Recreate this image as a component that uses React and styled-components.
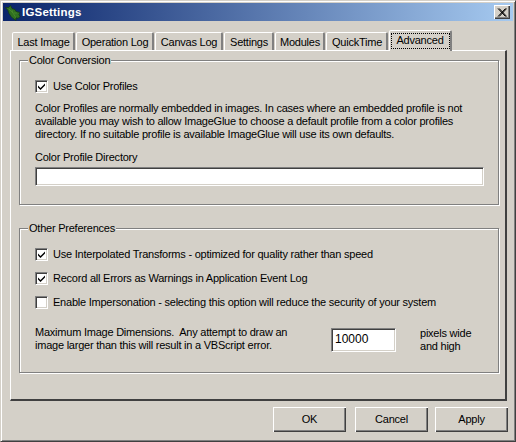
import React from "react";
import styled, { createGlobalStyle } from "styled-components";

const Global = createGlobalStyle`
  html, body { margin: 0; padding: 0; background: #d4d0c8; }
  * { box-sizing: border-box; }
`;

const Window = styled.div`
  width: 516px;
  height: 442px;
  display: flex;
  flex-direction: column;
  padding: 2px;
  background: #d4d0c8;
  border: 1px solid;
  border-color: #d4d0c8 #404040 #404040 #d4d0c8;
  box-shadow: inset 1px 1px 0 #fff, inset -1px -1px 0 #808080;
  font-family: "Liberation Sans", Arial, sans-serif;
  font-size: 11px;
  line-height: 13px;
  letter-spacing: -0.23px;
  color: #000;
`;

const TitleBar = styled.div`
  height: 18px;
  flex: none;
  display: flex;
  align-items: center;
  padding: 0 3px 0 2px;
  background: linear-gradient(90deg, #0a246a, #a6caf0);
`;

const TitleIcon = styled.svg`
  width: 17px;
  height: 17px;
  flex: none;
`;

const TitleText = styled.span`
  flex: 1;
  color: #fff;
  font-weight: 700;
  font-size: 11.5px;
  letter-spacing: 0.2px;
`;

const CloseButton = styled.div`
  width: 16px;
  height: 14px;
  display: flex;
  align-items: center;
  justify-content: center;
  background: #d4d0c8;
  box-shadow: inset 1px 1px 0 #fff, inset -1px -1px 0 #404040, inset -2px -2px 0 #808080;
`;

const Body = styled.div`
  flex: 1;
  display: flex;
  flex-direction: column;
  padding: 9px 5px 0 7px;
`;

const TabRow = styled.div`
  height: 20px;
  display: flex;
  align-items: flex-end;
  padding-left: 2px;
  gap: 1px;
  position: relative;
  z-index: 1;
`;

const Tab = styled.div`
  width: ${(p) => p.$w}px;
  height: ${(p) => (p.$active ? 21 : 18)}px;
  margin-bottom: ${(p) => (p.$active ? -1 : 0)}px;
  display: flex;
  align-items: center;
  justify-content: center;
  padding: ${(p) => (p.$active ? "0 0 1px" : "1px 0 0 1px")};
  background: #d4d0c8;
  border-radius: 2px 2px 0 0;
  border-style: solid;
  border-width: 1px 2px 0 1px;
  border-color: #fff #808080 transparent #fff;
`;

const Focus = styled.span`
  width: 59px;
  height: 16px;
  display: flex;
  align-items: center;
  justify-content: center;
  outline: 1px dotted #000;
  outline-offset: -1px;
`;

const Panel = styled.div`
  width: 497px;
  height: 351px;
  display: flex;
  flex-direction: column;
  padding: 9px 8px 0 8px;
  border-style: solid;
  border-width: 1px 2px 2px 1px;
  border-color: #fff #404040 #404040 #fff;
`;

const Group = styled.div`
  width: 480px;
  height: ${(p) => p.$h}px;
  margin-bottom: ${(p) => p.$mb || 0}px;
  padding: 0 15px;
  border: 1px solid #808080;
  box-shadow: 1px 1px 0 #fff, inset 1px 1px 0 #fff;
  display: flex;
  flex-direction: column;
`;

const Legend = styled.div`
  width: fit-content;
  margin: -7px 0 0 -7px;
  padding: 0 1px;
  height: 13px;
  background: #d4d0c8;
`;

const CheckRow = styled.label`
  display: flex;
  align-items: center;
  height: 13px;
  margin-top: ${(p) => p.$mt}px;
`;

const CheckBox = styled.span`
  width: 13px;
  height: 13px;
  flex: none;
  margin-right: 5px;
  background: #fff;
  border: 1px solid;
  border-color: #808080 #fff #fff #808080;
  box-shadow: inset 1px 1px 0 #404040, inset -1px -1px 0 #d4d0c8;
  display: flex;
  align-items: center;
  justify-content: center;
`;

const Paragraph = styled.p`
  margin: 9px 0 0;
  white-space: pre;
`;

const FieldLabel = styled.div`
  margin-top: 10px;
`;

const TextBox = styled.div`
  width: ${(p) => p.$w}px;
  height: ${(p) => p.$h}px;
  margin-top: ${(p) => p.$mt || 0}px;
  flex: none;
  padding: 4px 3px;
  background: #fff;
  border: 1px solid;
  border-color: #808080 #fff #fff #808080;
  box-shadow: inset 1px 1px 0 #404040, inset -1px -1px 0 #d4d0c8;
  font-size: 12px;
  letter-spacing: 0;
`;

const DimensionRow = styled.div`
  display: flex;
  margin-top: 17px;
  align-items: center;
`;

const DimensionText = styled.div`
  width: 296px;
  white-space: pre;
  padding-bottom: 1px;
`;

const Unit = styled.div`
  margin-left: 24px;
  white-space: pre;
`;

const ButtonRow = styled.div`
  display: flex;
  justify-content: flex-end;
  margin-top: 6px;
`;

const Button = styled.div`
  width: 73px;
  height: 25px;
  margin-left: ${(p) => p.$ml}px;
  display: flex;
  align-items: center;
  justify-content: center;
  background: #d4d0c8;
  box-shadow: inset 1px 1px 0 #fff, inset -1px -1px 0 #404040, inset -2px -2px 0 #808080;
`;

const Check = () => (
  <svg width="9" height="9" viewBox="0 0 9 9">
    <path d="M1 3.5v2l2.5 2.5 4.5-4.5v-2l-4.5 4.5z" fill="#000" />
  </svg>
);

const Option = ({ mt, checked, children }) => (
  <CheckRow $mt={mt}>
    <CheckBox>{checked && <Check />}</CheckBox>
    {children}
  </CheckRow>
);

const tabs = [
  ["Last Image", 63],
  ["Operation Log", 78],
  ["Canvas Log", 68],
  ["Settings", 50],
  ["Modules", 50],
  ["QuickTime", 62],
];

export default function App() {
  return (
    <Window>
      <Global />
      <TitleBar>
        <TitleIcon viewBox="0 0 17 17">
          <path
            d="M0.5 3.5h3l2-2 1.5 3 3 1 1 2 4 1-1 2 1 2-2 2-2-1v3l-3-2-2-2-2-3-1-3z"
            fill="#2f7020"
            stroke="#143a18"
            strokeWidth="0.8"
          />
          <path d="M4 5l4 4 3 5M7 6l1 3M9 9l3 0" stroke="#4a8a2c" strokeWidth="0.8" fill="none" />
        </TitleIcon>
        <TitleText>IGSettings</TitleText>
        <CloseButton>
          <svg width="10" height="9" viewBox="0 0 10 9">
            <path d="M1 0.5l7.5 8M2.2 0.5l7.5 8M8.5 0.5l-7.5 8M9.7 0.5l-7.5 8" stroke="#000" strokeWidth="1" />
          </svg>
        </CloseButton>
      </TitleBar>
      <Body>
        <TabRow>
          {tabs.map(([t, w]) => (
            <Tab key={t} $w={w}>{t}</Tab>
          ))}
          <Tab $w={63} $active>
            <Focus>Advanced</Focus>
          </Tab>
        </TabRow>
        <Panel>
          <Group $h={145} $mb={23}>
            <Legend>Color Conversion</Legend>
            <Option mt={13} checked>Use Color Profiles</Option>
            <Paragraph>
              {"Color Profiles are normally embedded in images. In cases where an embedded profile is not\navailable you may wish to allow ImageGlue to choose a default profile from a color profiles\ndirectory. If no suitable profile is available ImageGlue will use its own defaults."}
            </Paragraph>
            <FieldLabel>Color Profile Directory</FieldLabel>
            <TextBox $w={449} $h={19} $mt={3} />
          </Group>
          <Group $h={145}>
            <Legend>Other Preferences</Legend>
            <Option mt={13} checked>Use Interpolated Transforms - optimized for quality rather than speed</Option>
            <Option mt={11} checked>Record all Errors as Warnings in Application Event Log</Option>
            <Option mt={11}>Enable Impersonation - selecting this option will reduce the security of your system</Option>
            <DimensionRow>
              <DimensionText>
                {"Maximum Image Dimensions.  Any attempt to draw an\nimage larger than this will result in a VBScript error."}
              </DimensionText>
              <TextBox $w={65} $h={24}>10000</TextBox>
              <Unit>{"pixels wide\nand high"}</Unit>
            </DimensionRow>
          </Group>
        </Panel>
        <ButtonRow>
          <Button>OK</Button>
          <Button $ml={9}>Cancel</Button>
          <Button $ml={7}>Apply</Button>
        </ButtonRow>
      </Body>
    </Window>
  );
}
